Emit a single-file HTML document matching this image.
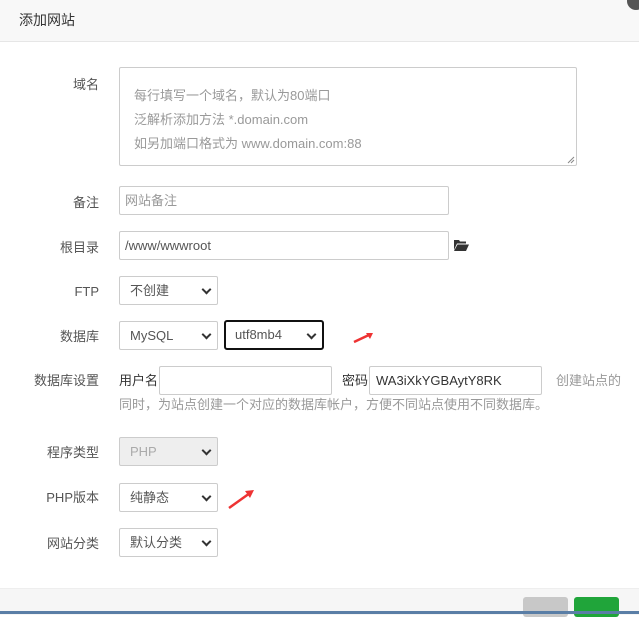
<!DOCTYPE html><html><head><meta charset="utf-8"><style>
body{margin:0;width:639px;height:614px;overflow:hidden;background:#fff;font-family:"Liberation Sans","Noto Sans CJK SC",sans-serif;font-size:13px;color:#555;position:relative;line-height:17px}
.a{position:absolute}
.hd{left:0;top:0;width:639px;height:41px;background:#f8f8f8;border-bottom:1px solid #e6e6e6}
.lb{width:99px;text-align:right;left:0}
.in{border:1px solid #ccc;border-radius:2px;box-sizing:border-box;background:#fff}
.sel{border:1px solid #ccc;border-radius:2px;box-sizing:border-box;background:#fff;padding-left:10px;line-height:27px;color:#555}
.sel:after{content:"";position:absolute;right:7px;top:9px;width:5px;height:5px;border-right:2px solid #333;border-bottom:2px solid #333;transform:rotate(45deg)}
.ph{color:#999}
</style></head><body>
<div class="a hd"></div>
<div class="a" style="left:19px;top:12px;font-size:14px;color:#333">添加网站</div>
<div class="a" style="left:627px;top:-8px;width:18px;height:18px;border-radius:50%;background:#555"></div>

<div class="a lb" style="top:76px">域名</div>
<div class="a in" style="left:119px;top:67px;width:458px;height:99px"></div>
<svg class="a" style="left:567px;top:156px" width="8" height="8"><path d="M1 7L7 1M4 7L7 4" stroke="#888"/></svg>
<div class="a ph" style="left:134px;top:84px;line-height:24px">每行填写一个域名，默认为80端口<br>泛解析添加方法 *.domain.com<br>如另加端口格式为 www.domain.com:88</div>

<div class="a lb" style="top:194px">备注</div>
<div class="a in" style="left:119px;top:186px;width:330px;height:29px"></div>
<div class="a ph" style="left:125px;top:192px">网站备注</div>

<div class="a lb" style="top:239px">根目录</div>
<div class="a in" style="left:119px;top:231px;width:330px;height:29px"></div>
<div class="a" style="left:125px;top:237px;color:#555">/www/wwwroot</div>
<svg class="a" style="left:454px;top:239px" width="15" height="12" viewBox="0 0 15 12"><path d="M0 1h5l1 1.5h6v2H3L0 11z M3.5 5.5H15L12 12H0z" fill="#333"/></svg>

<div class="a lb" style="top:283px">FTP</div>
<div class="a sel" style="left:119px;top:276px;width:99px;height:29px">不创建</div>

<div class="a lb" style="top:328px">数据库</div>
<div class="a sel" style="left:119px;top:321px;width:99px;height:29px">MySQL</div>
<div class="a sel" style="left:224px;top:320px;width:100px;height:30px;border:2px solid #111;border-radius:3px;padding-left:9px;line-height:26px">utf8mb4</div>
<svg class="a" style="left:352px;top:330px" width="24" height="14"><path d="M2 12L19 4" stroke="#e33" stroke-width="2.5"/><path d="M21 3l-7 0 4 6z" fill="#e33"/></svg>

<div class="a lb" style="top:372px">数据库设置</div>
<div class="a" style="left:119px;top:372px;color:#333">用户名</div>
<div class="a in" style="left:159px;top:366px;width:173px;height:29px"></div>
<div class="a" style="left:342px;top:372px;color:#333">密码</div>
<div class="a in" style="left:369px;top:366px;width:173px;height:29px"></div>
<div class="a" style="left:376px;top:372px;color:#333">WA3iXkYGBAytY8RK</div>
<div class="a ph" style="left:556px;top:372px">创建站点的</div>
<div class="a ph" style="left:119px;top:396px">同时，为站点创建一个对应的数据库帐户，方便不同站点使用不同数据库。</div>

<div class="a lb" style="top:444px">程序类型</div>
<div class="a sel" style="left:119px;top:437px;width:99px;height:29px;background:#eee;color:#aaa">PHP</div>

<div class="a lb" style="top:489px">PHP版本</div>
<div class="a sel" style="left:119px;top:483px;width:99px;height:29px">纯静态</div>
<svg class="a" style="left:226px;top:488px" width="30" height="22"><path d="M3 20L24 5" stroke="#e33" stroke-width="2.5"/><path d="M28 2l-9 1 5 7z" fill="#e33"/></svg>

<div class="a lb" style="top:535px">网站分类</div>
<div class="a sel" style="left:119px;top:528px;width:99px;height:29px">默认分类</div>

<div class="a" style="left:0;top:588px;width:639px;height:26px;background:#f6f6f6;border-top:1px solid #eee"></div>
<div class="a" style="left:523px;top:597px;width:45px;height:20px;background:#c8c8c8;border-radius:3px"></div>
<div class="a" style="left:574px;top:597px;width:45px;height:20px;background:#20a53a;border-radius:3px"></div>
<div class="a" style="left:0;top:611px;width:639px;height:3px;background:#5a7ea6"></div>
</body></html>
